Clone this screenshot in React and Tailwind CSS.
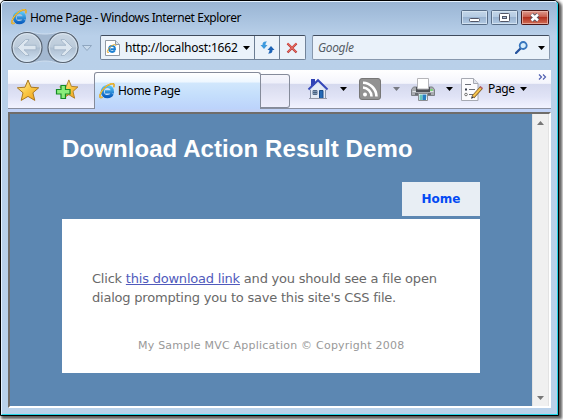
import React from "react";

const UI = "font-['Noto_Sans',sans-serif] leading-[16px] whitespace-nowrap";
const WEB = "font-['DejaVu_Sans',sans-serif] whitespace-nowrap";

function IELogo({ size }) {
  return (
    <svg width={size} height={size} viewBox="0 0 16 16" className="block shrink-0">
      <defs>
        <linearGradient id="ieBlue" x1="0" y1="0" x2="0" y2="1">
          <stop offset="0" stopColor="#55c4f4" />
          <stop offset="1" stopColor="#0b5fc0" />
        </linearGradient>
      </defs>
      <path d="M13.200 10.800C12.200 12.900 10.500 13.700 8.500 13.700 5.400 13.700 3.500 11.700 3.500 8.700 3.500 5.500 5.600 3.500 8.500 3.500c3 0 4.900 2.100 4.900 5.300H6" fill="none" stroke="url(#ieBlue)" strokeWidth="3.200" />
      <path d="M3.500 14C1 15.500.4 14 1.200 11.400 2.600 7.200 7.500 2 11.800.9c3.500-.9 3.800 1 2.800 3.300" fill="none" stroke="#c98f1d" strokeWidth="1.500" />
      <path d="M3.500 14C1 15.500.4 14 1.200 11.400 2.600 7.200 7.500 2 11.800.9c3.500-.9 3.800 1 2.800 3.300" fill="none" stroke="#ffcf3f" strokeWidth="1" />
    </svg>
  );
}

function Arrow({ color = "#000", className = "" }) {
  return (
    <svg width="7" height="4" viewBox="0 0 7 4" className={"block shrink-0 " + className}>
      <path d="M0 0h7L3.500 4z" fill={color} />
    </svg>
  );
}

function TitleBar() {
  return (
    <div className="flex h-[28px] pl-[9px] pr-[5px] pt-[7px]">
      <IELogo size={16} />
      <span className={UI + " mt-[1px] ml-[3px] w-[430px] text-[12px] text-black tracking-[-0.41px]"}>Home Page - Windows Internet Explorer</span>
      <svg width="90" height="16" viewBox="0 0 90 16" className="block shrink-0">
        <defs>
          <linearGradient id="btn" x1="0" y1="0" x2="0" y2="1">
            <stop offset="0" stopColor="#c5d7e9" />
            <stop offset=".45" stopColor="#b5cbe2" />
            <stop offset=".5" stopColor="#99b3d0" />
            <stop offset="1" stopColor="#b6cde6" />
          </linearGradient>
          <linearGradient id="close" x1="0" y1="0" x2="0" y2="1">
            <stop offset="0" stopColor="#dfa095" />
            <stop offset=".45" stopColor="#c95c4c" />
            <stop offset=".5" stopColor="#b3301f" />
            <stop offset="1" stopColor="#d3735b" />
          </linearGradient>
        </defs>
        <rect x="1.500" y="1.500" width="26" height="14" rx="1" fill="url(#btn)" stroke="#586d87" />
        <rect x="2.500" y="2.500" width="24" height="12" fill="none" stroke="#dce9f5" strokeOpacity=".75" />
        <rect x="31.500" y="1.500" width="26" height="14" rx="1" fill="url(#btn)" stroke="#586d87" />
        <rect x="32.500" y="2.500" width="24" height="12" fill="none" stroke="#dce9f5" strokeOpacity=".75" />
        <rect x="61.500" y="1.500" width="27" height="14" rx="1" fill="url(#close)" stroke="#4b1515" />
        <rect x="62.500" y="2.500" width="25" height="12" fill="none" stroke="#eeb9ae" strokeOpacity=".75" />
        <rect x="9.500" y="9.500" width="10" height="3" rx="1" fill="#fff" stroke="#535666" />
        <rect x="39.500" y="4.500" width="10" height="8" rx="1" fill="#fff" stroke="#535666" />
        <rect x="42.500" y="7.500" width="4" height="2" fill="#a9bfd7" stroke="#535666" />
        <path d="M71.500 5.500l6.500 6M78 5.500l-6.500 6" stroke="#535666" strokeWidth="4.400" />
        <path d="M71.500 5.500l6.500 6M78 5.500l-6.500 6" stroke="#fff" strokeWidth="2.500" />
      </svg>
    </div>
  );
}

function NavButtons() {
  return (
    <svg width="92" height="38" viewBox="0 0 92 38" className="block shrink-0">
      <defs>
        <linearGradient id="orb" x1="0" y1="0" x2="0" y2="1">
          <stop offset="0" stopColor="#c9d6e3" />
          <stop offset=".48" stopColor="#bccbda" />
          <stop offset=".52" stopColor="#aebfd1" />
          <stop offset="1" stopColor="#d0e2f4" />
        </linearGradient>
      </defs>
      <path d="M25 1.500C31 1.500 33 4 43 4S55 1.500 61 1.500a16 16 0 0 1 0 32C54 33.500 51 31 43 31S32 33.500 25 33.500a16 16 0 0 1 0-32z" fill="#a3b8d0" stroke="#cfdff0" strokeWidth="1" />
      <circle cx="25" cy="17.500" r="15" fill="url(#orb)" stroke="#56616e" strokeWidth="1.200" />
      <circle cx="25" cy="17.500" r="13.800" fill="none" stroke="#dfe8f1" strokeOpacity=".8" />
      <circle cx="61" cy="17.500" r="15" fill="url(#orb)" stroke="#56616e" strokeWidth="1.200" />
      <circle cx="61" cy="17.500" r="13.800" fill="none" stroke="#dfe8f1" strokeOpacity=".8" />
      <path d="M15.500 17.500l8-8h3.500l-1 2-4 3.800h12v4.500H22l4 3.700 1 2h-3.500z" fill="#dce6ef" stroke="#9fb2c6" strokeWidth=".8" />
      <path d="M70.500 17.500l-8-8H59l1 2 4 3.800H52v4.500h12l-4 3.700-1 2h3.500z" fill="#dce6ef" stroke="#9fb2c6" strokeWidth=".8" />
      <path d="M80.500 15.500h9L85 20.500z" fill="#c8daec" stroke="#8fa6c0" />
    </svg>
  );
}

function NavRow() {
  return (
    <div className="flex h-[40px]">
      <NavButtons />
      <div className="mt-[5px] ml-[6px] flex h-[25px] w-[206px] rounded-[2px] border border-[#72849a] border-t-[#3f4b5c] bg-[#eaf2fa]">
        <div className="flex w-[154px] items-center border-r border-[#6b7d93] pl-[4px]">
          <svg width="15" height="16" viewBox="0 0 15 16" className="block shrink-0">
            <path d="M.5.500h10l4 4v11H.500z" fill="#fff" stroke="#919aa5" />
            <path d="M10.500.500v4h4" fill="#dce3eb" stroke="#919aa5" />
            <path d="M9.800 10.500c-.7 1.200-1.500 1.500-2.700 1.500-1.900 0-3-1.200-3-3s1.200-3.100 3-3.100 2.900 1.200 2.900 3.300H5.500" fill="none" stroke="#1d81d2" strokeWidth="1.900" />
            <path d="M4 12c-3 2-1.700-2.500 1.500-5.300C8 4.400 11.200 3.600 10.700 6" fill="none" stroke="#e8ac29" />
          </svg>
          <span className={UI + " ml-[5px] w-[118px] text-[12px] tracking-[-0.21px] text-black"}>http://localhost:1662</span>
          <Arrow />
        </div>
        <div className="flex w-[25px] items-center justify-center border-r border-[#6b7d93]">
          <svg width="15" height="15" viewBox="0 0 15 15">
            <path d="M7 1.500C3.500 1 2.300 3 2.500 5H.5l3.500 4 3.500-4h-2C5.500 3.500 6 2.300 7 1.500z" fill="#3e9add" />
            <path d="M8 13.500c3.500.5 4.700-1.500 4.500-3.500h2L11 6l-3.500 4h2c0 1.500-.5 2.700-1.500 3.500z" fill="#1b62b5" />
          </svg>
        </div>
        <div className="flex w-[24px] items-center justify-center">
          <svg width="12" height="12" viewBox="0 0 12 12">
            <path d="M1.500 1.500l9 9M10.500 1.500l-9 9" stroke="#b53a38" strokeWidth="2.300" />
            <path d="M1.500 1.200l8.500 8.600M10.500 1.200L2 9.800" stroke="#e96c61" strokeWidth="1.200" />
          </svg>
        </div>
      </div>
      <div className="mt-[5px] ml-[6px] flex h-[25px] w-[238px] items-center rounded-[2px] border border-[#8798ad] border-t-[#3f4b5c] bg-[#eaf2fa] pl-[5px]">
        <span className={UI + " w-[197px] text-[12px] tracking-[-0.35px] text-[#555d66] italic"}>Google</span>
        <svg width="13" height="13" viewBox="0 0 13 13" className="block shrink-0">
          <path d="M1 12l4.500-4.500" stroke="#27549e" strokeWidth="2.300" strokeLinecap="round" />
          <circle cx="8.200" cy="4.500" r="3.500" fill="#d5edfc" stroke="#3675bd" strokeWidth="1.800" />
        </svg>
        <Arrow className="ml-[10px]" />
      </div>
    </div>
  );
}

const STAR = "M11 1l3 7.200 7.700.6-5.800 5 1.900 7.600L11 17.400l-6.800 4L6 13.800.300 8.800 8 8.200z";

function Star() {
  return (
    <>
      <defs>
        <linearGradient id="gold" x1="0" y1="0" x2="1" y2="1">
          <stop offset="0" stopColor="#fff0a5" />
          <stop offset=".5" stopColor="#fac947" />
          <stop offset="1" stopColor="#ee9c16" />
        </linearGradient>
      </defs>
      <path d={STAR} fill="url(#gold)" stroke="#a97822" strokeWidth="1" strokeLinejoin="round" />
    </>
  );
}

function HomeIcon() {
  return (
    <svg width="22" height="22" viewBox="0 0 22 22" className="block shrink-0">
      <path d="M4 1h4v7H4z" fill="#2f42b5" />
      <path d="M3.500 11L11 4l7.500 7v9.500h-15z" fill="#e4eaf4" stroke="#8792a8" />
      <path d="M1.500 11.500L11 2.200l9.500 9.300" fill="none" stroke="#3547b8" strokeWidth="2" />
      <path d="M2.500 12.300L11 4.200l8.500 8.100" fill="none" stroke="#c3cff0" strokeWidth="1" />
      <path d="M12.500 12.500h3.500v8h-3.500z" fill="#2468b5" stroke="#174a88" />
      <path d="M6 12.500h4v4H6z" fill="#9ebcdc" stroke="#5b6f8b" />
      <path d="M8 12.500v4M6 14.500h4" stroke="#40556f" strokeWidth=".8" />
      <path d="M2 20.500h18" stroke="#9498a5" />
    </svg>
  );
}

function FeedIcon() {
  return (
    <svg width="22" height="22" viewBox="0 0 22 22" className="block shrink-0">
      <rect x=".5" y=".5" width="21" height="21" rx="2.500" fill="#929292" stroke="#777" />
      <circle cx="6" cy="16.500" r="2" fill="#fff" />
      <path d="M4 9.500a9 9 0 0 1 8.500 9M4 4.800a14 14 0 0 1 13.500 13.700" fill="none" stroke="#fff" strokeWidth="2.600" />
    </svg>
  );
}

function PrinterIcon() {
  return (
    <svg width="24" height="24" viewBox="0 0 24 24" className="block shrink-0">
      <path d="M2.500 9h19l2 2.500v6H.5v-6z" fill="#a9acb1" stroke="#7c8086" />
      <path d="M5 9h14v5H5z" fill="#4e5156" />
      <path d="M6.500.500h11V11h-11z" fill="#fff" stroke="#b5b5b9" />
      <path d="M1.500 13.500h3.500M19 13.500h3.500" stroke="#dfe2e5" />
      <path d="M4 16h16" stroke="#54575c" strokeWidth="1.500" />
      <path d="M7.500 15.500h9v7h-9z" fill="#fff" stroke="#8a8d92" />
      <path d="M8.500 16.500h3V22h-3z" fill="#67c6bb" />
      <path d="M11.500 16.500h4l-.5 5.500h-3.500z" fill="#287fc3" />
      <path d="M19.500 11h2v2h-2z" fill="#6fe06b" />
    </svg>
  );
}

function PageIcon() {
  return (
    <svg width="23" height="23" viewBox="0 0 23 23" className="block shrink-0">
      <path d="M.5.500h12l4.500 5v17H.500z" fill="#fbfbfd" stroke="#a6a9b2" />
      <path d="M12.500.500v5H17" fill="#e1e4eb" stroke="#a6a9b2" />
      <path d="M4 6.500h6M8 11.500h6M8 16.500h4" stroke="#6c7079" />
      <path d="M4 10.500h2v2H4z" fill="#333a49" />
      <circle cx="5" cy="16.500" r="1.300" fill="#fff" stroke="#555" strokeWidth=".8" />
      <path d="M12 19L20.500 9.500" stroke="#7c5722" strokeWidth="3.400" />
      <path d="M12.300 18.500L20 10" stroke="#f6c54f" strokeWidth="2" />
      <path d="M19 8.500l2.500 2" stroke="#b85c67" strokeWidth="1.600" />
      <path d="M10 20.800l.8-2.800 2 1.800z" fill="#333" />
    </svg>
  );
}

function Toolbar() {
  return (
    <div className="ml-[6px] flex h-[42px] w-[543px] flex-col bg-[#c0d2f7]">
      <div className="flex h-[39px] border-b border-[#8a8f9f] bg-[linear-gradient(#ffffff_0%,#f4f5fc_35%,#d5d9ee_38%,#e0e3f6_70%,#f2f3ff_100%)]">
        <div className="flex w-[86px] pt-[9px] pl-[9px]">
          <svg width="22" height="22" viewBox="0 0 22 22" className="block shrink-0"><Star /></svg>
          <svg width="24" height="22" viewBox="0 0 24 22" className="ml-[16px] block shrink-0">
            <g transform="translate(4.500 0) scale(.85 .9)"><Star /></g>
            <path d="M6 6.500h4.500v4H15V15h-4.500v4.500H6V15H1.500v-4.500H6z" fill="#8aed7b" stroke="#168a26" strokeWidth="1.200" />
          </svg>
        </div>
        <div className="mt-[2px] flex h-[37px] w-[167px] items-center rounded-t-[3px] border border-b-0 border-[#858b9a] bg-[linear-gradient(#ffffff_0%,#eef7ff_25%,#d1e7fc_28%,#c5dffc_60%,#bcd3fb_100%)] pl-[4px]">
          <IELogo size={16} />
          <span className={UI + " ml-[3px] text-[12px] tracking-[-0.35px] text-black"}>Home Page</span>
        </div>
        <div className="mt-[4px] h-[34px] w-[29px] rounded-r-[3px] border border-l-0 border-[#858b9a] bg-[linear-gradient(#f5f5fb_0%,#eeeffa_25%,#d8dbee_28%,#eeeefc_100%)]" />
        <div className="flex pt-[8px] pl-[17px]">
          <HomeIcon />
          <Arrow className="mt-[9px] ml-[11px]" />
          <div className="ml-[12px]"><FeedIcon /></div>
          <Arrow color="#777a82" className="mt-[9px] ml-[12px]" />
          <div className="ml-[11px]"><PrinterIcon /></div>
          <Arrow className="mt-[9px] ml-[11px]" />
          <div className="ml-[8px]"><PageIcon /></div>
          <span className={UI + " mt-[3px] ml-[4px] w-[32px] text-[12px] tracking-[-0.35px] text-black"}>Page</span>
          <Arrow className="mt-[9px]" />
          <svg width="9" height="6" viewBox="0 0 9 6" className="-mt-[4px] ml-[11px] block shrink-0">
            <path d="M1 .5L3.500 3 1 5.500M5 .5L7.500 3 5 5.500" fill="none" stroke="#5160b0" strokeWidth="1.200" />
          </svg>
        </div>
      </div>
    </div>
  );
}

function Page() {
  return (
    <div className="h-[292px] w-[522px] shrink-0 bg-[#5c87b2] px-[52px]">
      <h1 className="h-[68px] pt-[19px] font-['Liberation_Sans',sans-serif] text-[24px] leading-[32px] font-bold tracking-[0.08px] whitespace-nowrap text-white">Download Action Result Demo</h1>
      <div className="flex h-[37px] justify-end">
        <a className={WEB + " h-[34px] w-[78px] bg-[#e8eef4] text-center text-[12px] leading-[34px] font-bold text-[#034af3]"}>Home</a>
      </div>
      <div className="h-[154px] bg-white pt-[50px] pl-[30px]">
        <p className={WEB + " text-[13px] leading-[19px] tracking-[-0.21px] text-[#696969]"}>
          Click <a className="text-[#505abc] underline">this download link</a> and you should see a file open<br />
          dialog prompting you to save this site's CSS file.
        </p>
        <p className={WEB + " mt-[31px] ml-[46px] text-[11px] leading-[16px] tracking-[0.22px] text-[#999999]"}>My Sample MVC Application © Copyright 2008</p>
      </div>
    </div>
  );
}

function ScrollBar() {
  return (
    <div className="flex h-[292px] w-[17px] flex-col items-center justify-between border-x border-[#e3e3e3] bg-[#f0f0f0] pt-[7px] pb-[6px]">
      <svg width="7" height="4" viewBox="0 0 7 4"><path d="M0 4h7L3.500 0z" fill="#777" /></svg>
      <Arrow color="#777" />
    </div>
  );
}

export default function App() {
  return (
    <div className="h-[420px] w-[563px] overflow-hidden bg-white">
      <div className="h-[416px] w-[559px] rounded-t-[5px] border border-black bg-[#b9d1ea] shadow-[2px_2px_3px_1px_rgba(0,0,0,0.65)]">
        <div className="h-[414px] w-[557px] rounded-t-[4px] border border-t-[#e5f2ff] border-r-[#24d3e6] border-b-[#24d3e6] border-l-[#e5f2ff] bg-[linear-gradient(#9ab5d4_0px,#a6c0dd_14px,#b9d0e9_34px,#b9d1ea_100%)]">
          <TitleBar />
          <NavRow />
          <Toolbar />
          <div className="ml-[6px] h-[296px] w-[543px] border-2 border-t-[#706d6a] border-r-white border-b-white border-l-[#706d6a]">
            <div className="flex h-[292px]">
              <Page />
              <ScrollBar />
            </div>
          </div>
        </div>
      </div>
    </div>
  );
}
